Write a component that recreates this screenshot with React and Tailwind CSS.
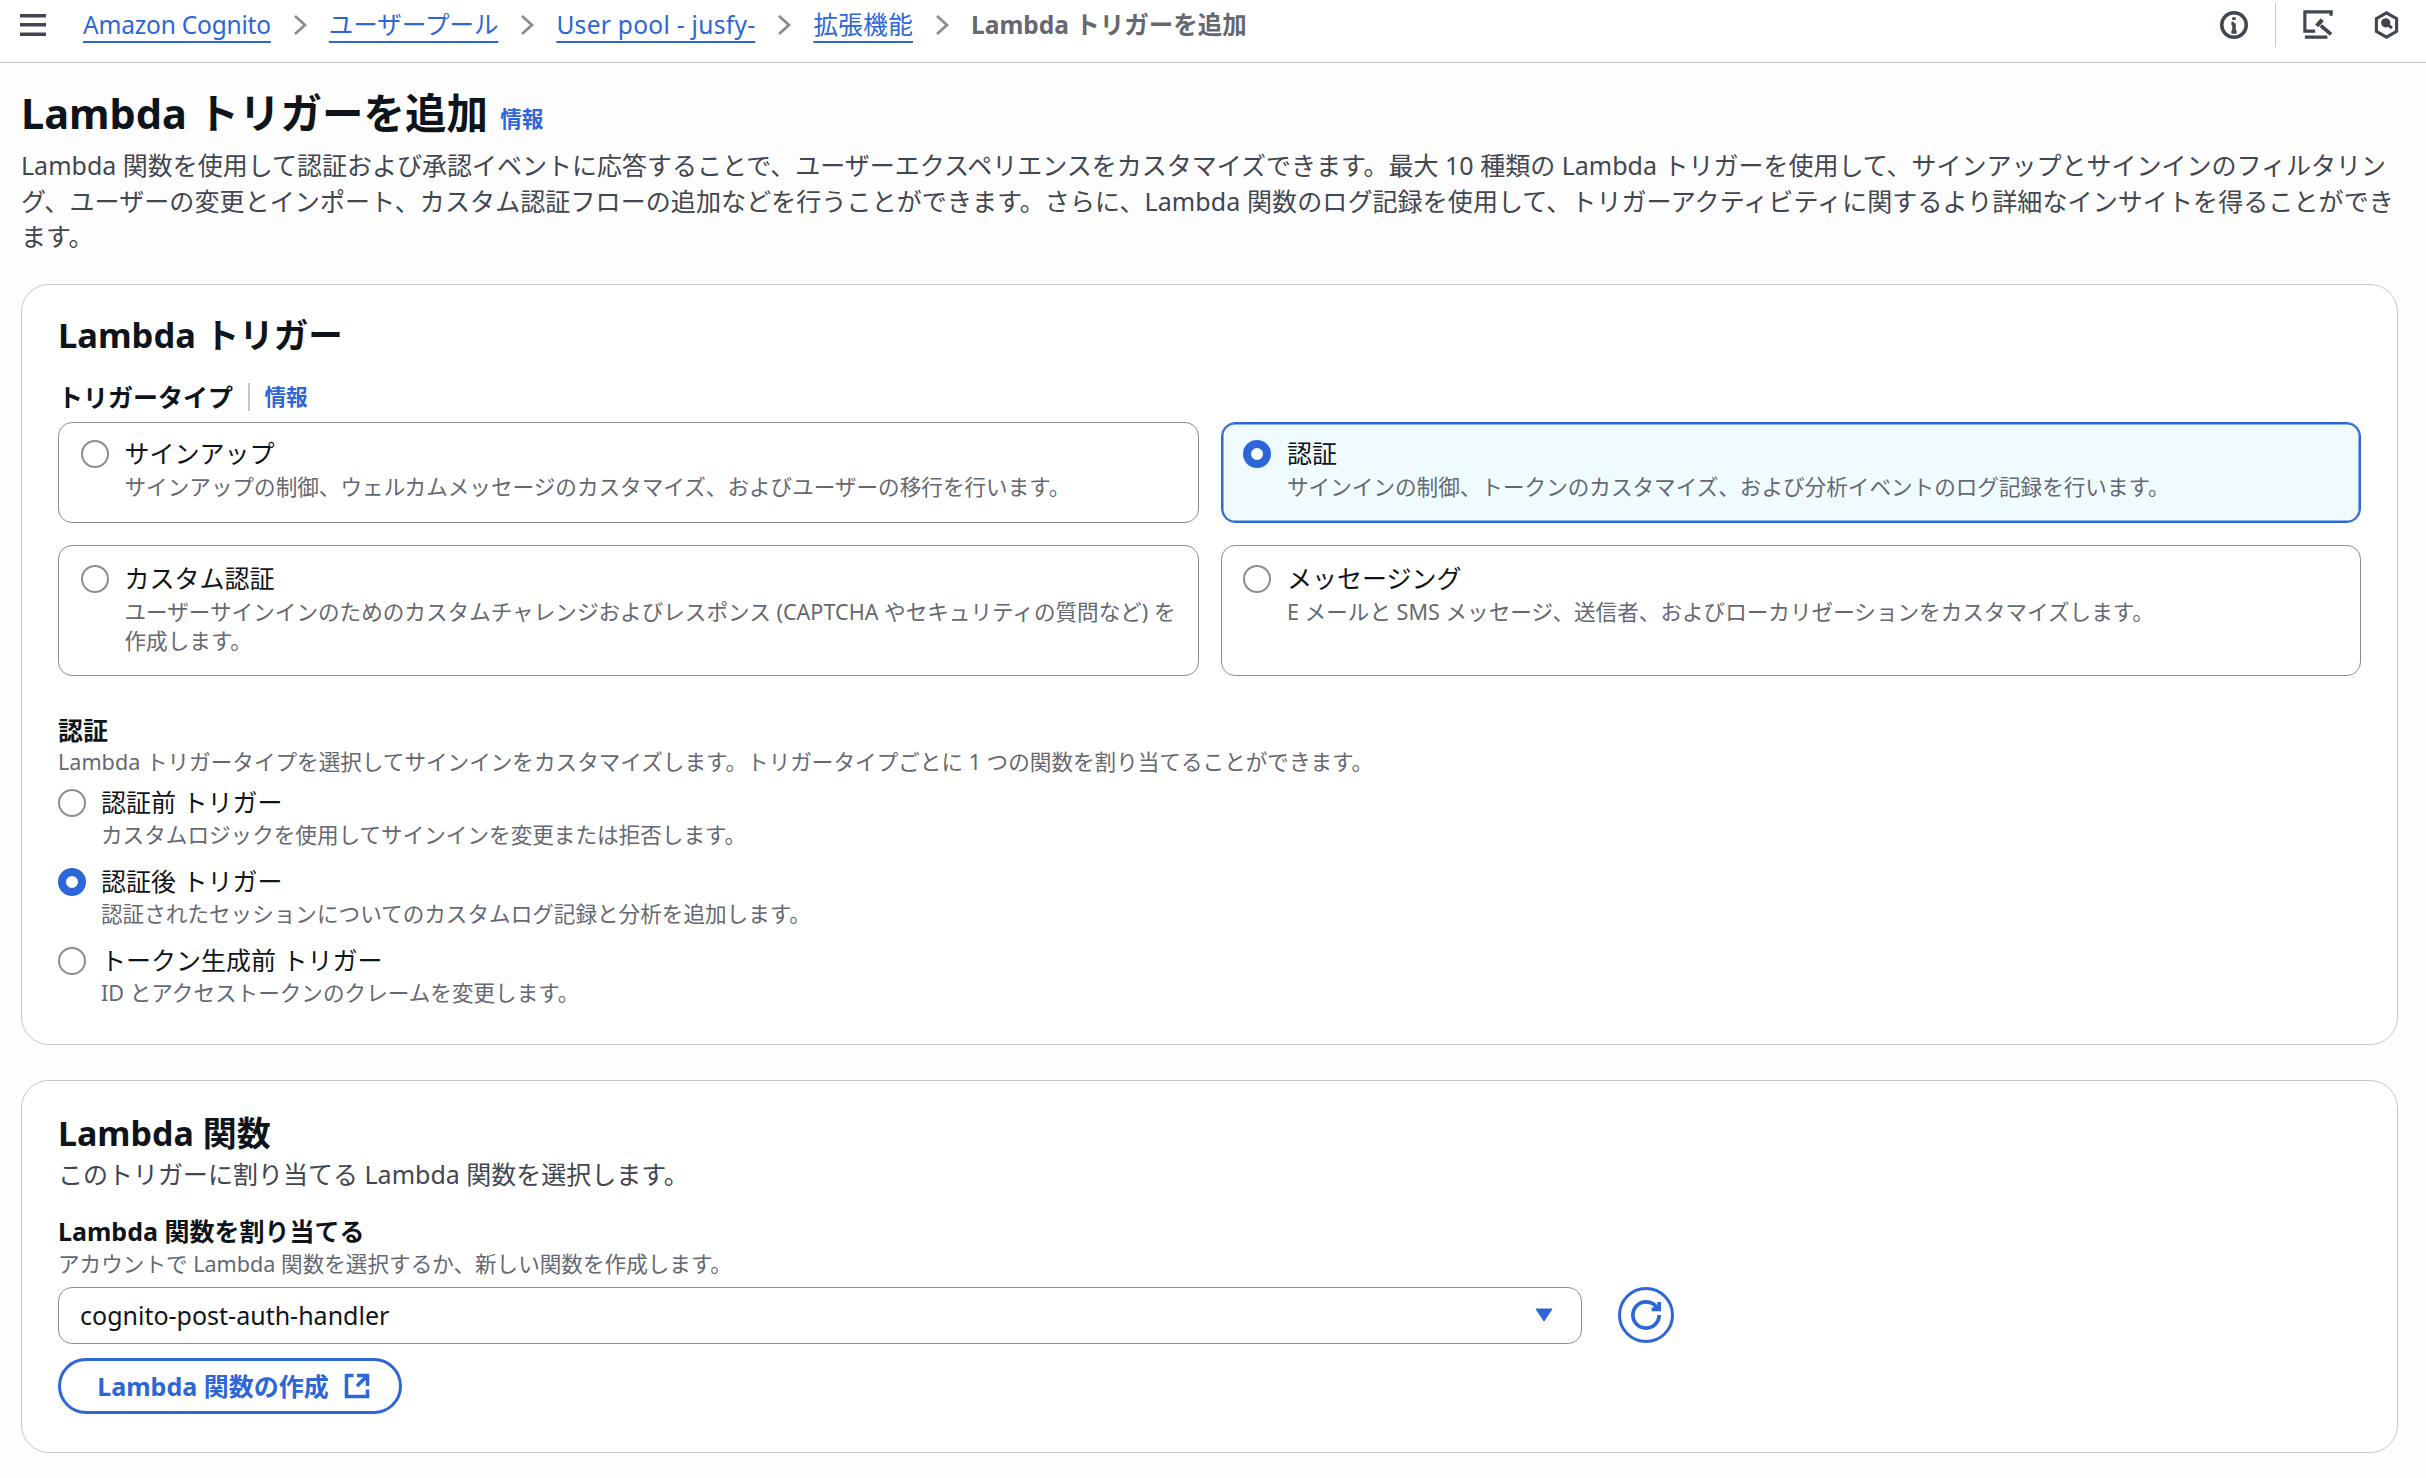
import { Fragment } from "react";

const Radio = ({ checked }) => (
  <span
    className={
      checked
        ? "size-[28px] shrink-0 rounded-full border-[8.5px] border-[#2c66d8] bg-white"
        : "size-[28px] shrink-0 rounded-full border-[2px] border-[#8c8c94] bg-white"
    }
  />
);

const Chevron = () => (
  <svg viewBox="0 0 14 20" className="mx-[22px] h-[22px] w-[14px] shrink-0 fill-none stroke-[#8c8c94] stroke-[2.8]">
    <path d="M2 1l10 9-10 9" />
  </svg>
);

const Info = () => (
  <a className="text-[21.6px] leading-[28px] font-bold text-[#2c66d8]">情報</a>
);

const crumbs = [
  { label: "Amazon Cognito", cls: "tracking-[-0.2px] text-[#2c66d8] underline decoration-[2px] underline-offset-[7px]" },
  { label: "ユーザープール", cls: "text-[#2c66d8] underline decoration-[2px] underline-offset-[7px]" },
  { label: "User pool - jusfy-", cls: "tracking-[0.3px] text-[#2c66d8] underline decoration-[2px] underline-offset-[7px]" },
  { label: "拡張機能", cls: "tracking-[0.4px] text-[#2c66d8] underline decoration-[2px] underline-offset-[7px]" },
];

const tiles = [
  {
    title: "サインアップ",
    cls: "border-[#8c8c94] bg-white pb-[21px] pt-[13.5px]",
    desc: ["サインアップの制御、ウェルカムメッセージのカスタマイズ、およびユーザーの移行を行います。"],
  },
  {
    title: "認証",
    checked: true,
    cls: "border-[#2c66d8] bg-[#f0fbff] pb-[21px] pt-[13.5px] ring-[1.5px] ring-inset ring-[#2c66d8]",
    desc: ["サインインの制御、トークンのカスタマイズ、および分析イベントのログ記録を行います。"],
  },
  {
    title: "カスタム認証",
    cls: "border-[#8c8c94] bg-white pb-[20px] pt-[15px]",
    desc: [
      "ユーザーサインインのためのカスタムチャレンジおよびレスポンス (CAPTCHA やセキュリティの質問など) を",
      "作成します。",
    ],
  },
  {
    title: "メッセージング",
    cls: "border-[#8c8c94] bg-white pb-[20px] pt-[15px]",
    desc: ["E メールと SMS メッセージ、送信者、およびローカリゼーションをカスタマイズします。"],
  },
];

const triggers = [
  { title: "認証前 トリガー", desc: "カスタムロジックを使用してサインインを変更または拒否します。" },
  { title: "認証後 トリガー", desc: "認証されたセッションについてのカスタムログ記録と分析を追加します。", checked: true },
  { title: "トークン生成前 トリガー", desc: "ID とアクセストークンのクレームを変更します。" },
];

const App = () => {
  return (
    <div className="min-h-screen bg-[#fdfdfd] text-[25px] leading-[35px] text-[#0f141a] [font-family:'Noto_Sans','Noto_Sans_CJK_JP',sans-serif]">
      {/* Top bar */}
      <header className="h-[63px] border-b-[1.5px] border-[#c6c6cd] bg-white text-[24.5px]">
        <div className="flex h-[49px] items-center pl-[20px] pr-[27px]">
          <svg viewBox="0 0 26 22" className="mr-[37px] h-[22px] w-[26px] shrink-0 fill-[#424650]">
            <path d="M0 0h26v3.5H0zM0 9h26v3.5H0zM0 18.5h26V22H0z" />
          </svg>
          {crumbs.map((c) => (
            <Fragment key={c.label}>
              <a className={c.cls}>{c.label}</a>
              <Chevron />
            </Fragment>
          ))}
          <span className="font-bold text-[#656871]">Lambda トリガーを追加</span>

          <div className="ml-auto flex items-center">
            <svg viewBox="0 0 16 16" className="size-[28px] fill-none stroke-[#424650] stroke-2">
              <circle cx="8" cy="8" r="7" />
              <path d="M8 12V7M6.5 7.2H8M6.5 12h3M8 3.6v1.6" />
            </svg>
            <span className="mx-[27px] h-[44px] w-[1.5px] bg-[#c6c6cd]" />
            <svg viewBox="0 0 16 16" className="size-[30px] fill-none stroke-[#424650] stroke-[1.7]">
              <path d="M15 3V1H1v10.3h5.5M1 14.5h12" />
              <path d="M9.500 8.300L15 13" strokeWidth="2" />
              <path d="M7.300 8.500L10.300 5.200" strokeWidth="2.200" />
            </svg>
            <svg viewBox="0 0 16 18" className="ml-[41px] h-[28px] w-[25px] fill-none stroke-[#424650] stroke-2">
              <path d="M8 1.2l6.5 3.7v8.2L8 16.8l-6.5-3.7V4.900z" />
              <circle cx="7.500" cy="7.600" r="2" fill="#424650" />
              <path d="M8 8l3.500 3" />
            </svg>
          </div>
        </div>
      </header>

      <main className="pb-[25px] pl-[21px] pr-[28px] pt-[25px]">
        <div className="flex items-end">
          <h1 className="text-[41.5px] leading-[50px] font-bold">Lambda トリガーを追加</h1>
          <span className="ml-[12px] pb-[3px]">
            <Info />
          </span>
        </div>
        <p className="mt-[10px] whitespace-nowrap leading-[35.5px] text-[#424650]">
          Lambda 関数を使用して認証および承認イベントに応答することで、ユーザーエクスペリエンスをカスタマイズできます。最大 10 種類の Lambda トリガーを使用して、サインアップとサインインのフィルタリン
          <br />
          <span className="tracking-[0.1px]">
            グ、ユーザーの変更とインポート、カスタム認証フローの追加などを行うことができます。さらに、Lambda 関数のログ記録を使用して、トリガーアクティビティに関するより詳細なインサイトを得ることができ
          </span>
          <br />
          ます。
        </p>

        {/* Lambda trigger card */}
        <section className="mt-[29.5px] rounded-[28px] border-[1.5px] border-[#c6c6cd] bg-white px-[36px] pb-[36.5px] pt-[28.5px]">
          <h2 className="text-[34.500px] leading-[42px] font-bold">Lambda トリガー</h2>
          <div className="mt-[24px] flex items-center">
            <span className="font-bold">トリガータイプ</span>
            <span className="mx-[15px] h-[28px] w-[1.5px] bg-[#c6c6cd]" />
            <Info />
          </div>

          <div className="mt-[7px] grid grid-cols-2 gap-[22px]">
            {tiles.map((t) => (
              <div
                key={t.title}
                className={`flex gap-[16px] rounded-[14px] border-[1.5px] pl-[21.5px] pr-[20px] ${t.cls}`}
              >
                <span className="mt-[4px] flex">
                  <Radio checked={t.checked} />
                </span>
                <div>
                  <div>{t.title}</div>
                  <div className="mt-[1px] text-[21.6px] leading-[29px] text-[#656871]">
                    {t.desc.map((line) => (
                      <div key={line} className="whitespace-nowrap">{line}</div>
                    ))}
                  </div>
                </div>
              </div>
            ))}
          </div>

          <div className="mt-[37px] font-bold">認証</div>
          <div className="text-[21.6px] leading-[28px] text-[#656871]">
            Lambda トリガータイプを選択してサインインをカスタマイズします。トリガータイプごとに 1 つの関数を割り当てることができます。
          </div>
          <div className="mt-[9px] flex flex-col gap-[15px]">
            {triggers.map((t) => (
              <div key={t.title} className="flex gap-[15px]">
                <span className="mt-[4px] flex">
                  <Radio checked={t.checked} />
                </span>
                <div>
                  <div>{t.title}</div>
                  <div className="mt-[1px] text-[21.6px] leading-[28px] text-[#656871]">{t.desc}</div>
                </div>
              </div>
            ))}
          </div>
        </section>

        {/* Lambda function card */}
        <section className="mt-[35.5px] rounded-[28px] border-[1.5px] border-[#c6c6cd] bg-white px-[36px] pb-[37.5px] pt-[30.5px]">
          <h2 className="text-[34px] leading-[42px] font-bold">Lambda 関数</h2>
          <p className="mt-[3.5px] text-[#424650]">このトリガーに割り当てる Lambda 関数を選択します。</p>
          <div className="mt-[22px] font-bold">Lambda 関数を割り当てる</div>
          <div className="mt-[1px] text-[21.6px] leading-[28px] text-[#656871]">
            アカウントで Lambda 関数を選択するか、新しい関数を作成します。
          </div>
          <div className="mt-[8.5px] flex items-center gap-[36px]">
            <div className="flex h-[57px] w-[1524px] items-center justify-between rounded-[14px] border-[1.5px] border-[#8c8c94] bg-white pl-[21px] pr-[28px]">
              <span>cognito-post-auth-handler</span>
              <svg viewBox="0 0 18 14" className="h-[14px] w-[18px] fill-[#2c66d8]">
                <path d="M1 1h16l-8 12z" stroke="#2c66d8" strokeLinejoin="round" />
              </svg>
            </div>
            <button className="flex size-[56px] items-center justify-center rounded-full border-[3px] border-[#2c66d8]">
              <svg viewBox="0 0 16 16" className="size-[30px] fill-none stroke-[#2c66d8] stroke-2">
                <path d="M15 8c0 3.870-3.130 7-7 7s-7-3.130-7-7 3.130-7 7-7c2.790 0 5.200 1.630 6.330 4" />
                <path d="M15 1v4h-4" />
              </svg>
            </button>
          </div>
          <button className="mt-[14.5px] flex h-[56px] w-[344px] items-center justify-center gap-[14px] rounded-full border-[3px] border-[#2c66d8] pl-[8px] font-bold text-[#2c66d8]">
            Lambda 関数の作成
            <svg viewBox="0 0 16 16" className="size-[28px] fill-none stroke-[#2c66d8] stroke-2">
              <path d="M14 8.010v-6H8M14.020 2L8 8.010M6 2.010H2v12h12v-3.990" />
            </svg>
          </button>
        </section>
      </main>
    </div>
  );
};

export default App;
